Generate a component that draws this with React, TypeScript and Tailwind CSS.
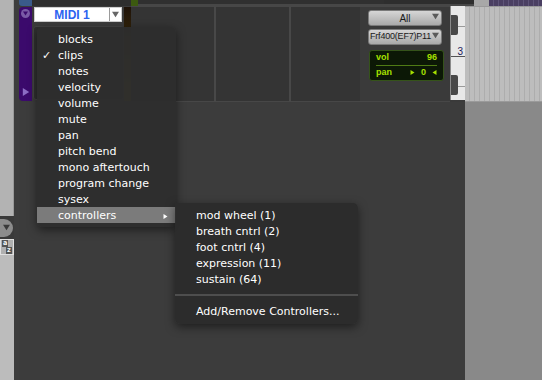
import React from "react";

const mainItems = [
  "blocks",
  "clips",
  "notes",
  "velocity",
  "volume",
  "mute",
  "pan",
  "pitch bend",
  "mono aftertouch",
  "program change",
  "sysex",
  "controllers",
];

const controllerItems = [
  "mod wheel (1)",
  "breath cntrl (2)",
  "foot cntrl (4)",
  "expression (11)",
  "sustain (64)",
];

function Tri({ dir, size, color }: { dir: "down" | "right" | "left"; size: number; color: string }) {
  const pts = dir === "down" ? "0,0 10,0 5,8" : dir === "right" ? "0,0 8,5 0,10" : "8,0 0,5 8,10";
  const vb = dir === "down" ? "0 0 10 8" : "0 0 8 10";
  return (
    <svg width={size} height={size} viewBox={vb} className="shrink-0">
      <polygon points={pts} fill={color} />
    </svg>
  );
}

function LeftColumn() {
  return (
    <div className="w-[14px] h-full flex flex-col">
      <div className="h-[216px] bg-[#b3b3b3] border-r border-[#9a9a9a]" />
      <div className="h-[23px] bg-[#3a3a3a] flex items-center">
        <div className="w-[13px] h-[18px] rounded-r-full bg-[#8c8c8c] flex items-center justify-center">
          <Tri dir="down" size={7} color="#3a3a3a" />
        </div>
      </div>
      <div className="h-[16px] bg-[#b0b0b0] border border-[#e0e0e0] flex flex-col px-[1px] font-['DejaVu_Sans_Mono',monospace] text-[7px] leading-[7px] font-bold text-white">
        <span className="bg-[#555] w-fit px-[1px]">a</span>
        <span className="bg-[#555] w-fit px-[1px] self-end">z</span>
      </div>
      <div className="flex-1 bg-[#bcbcbc]" />
    </div>
  );
}

function TrackHeader() {
  return (
    <div className="flex h-full">
      <div className="w-[13px] mt-[1px] mb-[1px] bg-[#3b0a6c] rounded-l-[4px] flex flex-col items-center justify-between py-[2px]">
        <div className="w-[9px] h-[9px] rounded-full bg-[#7a5aa6] flex items-center justify-center">
          <Tri dir="down" size={5} color="#3b0a6c" />
        </div>
        <div className="mb-[3px]">
          <Tri dir="right" size={8} color="#8c6cc4" />
        </div>
      </div>
      <div className="w-[92px] flex flex-col pt-[1px]">
        <div className="ml-[2px] w-[88px] h-[15px] bg-white flex border border-[#cfcfcf]">
          <div className="flex-1 flex items-center justify-center font-['Liberation_Sans',sans-serif] font-bold text-[12px] text-[#2d63f0]">
            MIDI 1
          </div>
          <div className="w-[12px] border-l border-[#9a9a9a] flex items-start justify-center pt-[3px]">
            <Tri dir="down" size={7} color="#666" />
          </div>
        </div>
        <div className="flex-1 ml-[1px] mt-[4px] mb-[2px] bg-[#2f2f2f] border border-[#444] rounded-[3px]" />
      </div>
      <div className="w-[7px] my-[1px] bg-[linear-gradient(180deg,#1e1208_0%,#3a2a0a_35%,#6b5c12_100%)]" />
    </div>
  );
}

function Lane({ w }: { w: string }) {
  return <div className={`${w} h-full bg-[#343434] border-y border-[#474747]`} />;
}

function Dropdown({ label, center }: { label: string; center?: boolean }) {
  return (
    <div
      className={`relative h-[16px] rounded-[3px] bg-[linear-gradient(180deg,#d6d6d6,#a9a9a9)] border border-[#7a7a7a] flex items-center ${
        center ? "justify-center text-[10px]" : "pl-[1px] text-[9px] tracking-[-0.2px]"
      } font-['Liberation_Sans',sans-serif] text-[#1a1a1a] overflow-hidden`}
    >
      {label}
      <span className="absolute right-[2px] top-[2px]">
        <Tri dir="down" size={7} color="#5a5a5a" />
      </span>
    </div>
  );
}

function RightPanel() {
  return (
    <div className="w-[90px] h-full bg-[#3a3a3a] border-y border-[#474747] pt-[3px] px-[8px] flex flex-col">
      <Dropdown label="All" center />
      <div className="h-[3px]" />
      <Dropdown label="Frf400(EF7)P11" />
      <div className="h-[5px]" />
      <div className="ml-[1px] w-[75px] h-[31px] rounded-[3px] bg-[#0c1806] border border-[#35531a] px-[6px] flex flex-col font-['Liberation_Sans',sans-serif] font-bold text-[9px] text-[#a6e000]">
        <div className="flex justify-between items-center h-[14px]">
          <span>vol</span>
          <span>96</span>
        </div>
        <div className="h-[1px] bg-[#4f7a14]" />
        <div className="flex justify-between items-center h-[13px]">
          <span>pan</span>
          <span className="flex items-center gap-[6px]">
            <Tri dir="right" size={5} color="#a6e000" />
            <span>0</span>
            <Tri dir="left" size={5} color="#a6e000" />
          </span>
        </div>
      </div>
    </div>
  );
}

function Ruler() {
  return (
    <div className="relative w-[15px] h-[94px] bg-[#e8e8e8] border-l border-[#8a8a8a]">
      <div className="absolute left-0 top-[9px] w-[7px] h-[20px] rounded-r-[2px] bg-[#484848]" />
      <div className="absolute left-0 top-[69px] w-[7px] h-[20px] rounded-r-[2px] bg-[#484848]" />
      <div className="absolute left-[7px] right-0 top-[20px] h-[1px] bg-[#9a9a9a]" />
      <div className="absolute left-0 right-0 top-[50px] h-[1px] bg-[#555]" />
      <div className="absolute left-[7px] right-0 top-[80px] h-[1px] bg-[#9a9a9a]" />
      <span className="absolute right-[2px] top-[38px] font-['Liberation_Sans',sans-serif] text-[10px] text-[#1c1c5a]">3</span>
    </div>
  );
}

function MenuRow({ label, checked, active, arrow }: { label: string; checked?: boolean; active?: boolean; arrow?: boolean }) {
  return (
    <div className={`relative h-[16px] flex items-center pl-[21px] ${active ? "bg-[#7b7b7b]" : ""}`}>
      {checked && <span className="absolute left-[5px] top-[1px] text-[11px] font-bold">✓</span>}
      <span className="pt-[2px]">{label}</span>
      {arrow && (
        <span className="absolute right-[8px] top-[7px]">
          <Tri dir="right" size={5} color="#ffffff" />
        </span>
      )}
    </div>
  );
}

export default function App() {
  return (
    <div className="relative w-[542px] h-[380px] overflow-hidden bg-[#3b3b3b] flex">
      <LeftColumn />
      <div className="w-[5px] h-full bg-[#3d3d3d]" />
      <div className="flex-1 flex flex-col">
        <div className="h-[6px] flex">
          <div className="w-[13px] bg-[#3a5a8a] rounded-bl-[3px]" />
          <div className="w-[99px] bg-[#2e2e2e]" />
          <div className="w-[7px] bg-[#3c5a10]" />
          <div className="w-[246px] bg-[#303030] border-b-2 border-[#474747]" />
          <div className="w-[90px] bg-[#2e2e2e] border-b-2 border-[#474747]" />
          <div className="w-[15px] bg-[#a8a8a8]" />
          <div className="flex-1 bg-[repeating-linear-gradient(90deg,#4a3f62_0px,#4a3f62_4px,#5e5478_4px,#5e5478_5px)]" />
        </div>
        <div className="h-[96px] flex">
          <TrackHeader />
          <Lane w="w-[83px]" />
          <div className="w-[2px] bg-[#484848]" />
          <Lane w="w-[73px]" />
          <div className="w-[2px] bg-[#484848]" />
          <Lane w="w-[69px]" />
          <RightPanel />
          <div className="flex flex-col">
            <Ruler />
            <div className="flex-1 bg-[#3a3a3a]" />
          </div>
          <div className="flex-1 bg-[repeating-linear-gradient(90deg,#bdbdbd_0px,#bdbdbd_4px,#adadad_4px,#adadad_5px)] border-y border-[#9a9a9a]" />
        </div>
        <div className="flex-1 flex">
          <div className="w-[446px] bg-[#3c3c3c]" />
          <div className="flex-1 bg-[#898989]" />
        </div>
      </div>

      <div className="absolute left-[37px] top-[27px] w-[139px] h-[200px] bg-[#2d2d2d]/95 rounded-[5px] shadow-[0_3px_10px_rgba(0,0,0,0.5)] pt-[4px] font-['DejaVu_Sans',sans-serif] text-[11px] text-white">
        {mainItems.map((item) => (
          <MenuRow
            key={item}
            label={item}
            checked={item === "clips"}
            active={item === "controllers"}
            arrow={item === "controllers"}
          />
        ))}
      </div>

      <div className="absolute left-[175px] top-[203px] w-[183px] h-[121px] bg-[#2b2b2b]/95 rounded-[5px] rounded-tl-none shadow-[0_3px_10px_rgba(0,0,0,0.5)] pt-[4px] font-['DejaVu_Sans',sans-serif] text-[11px] text-white">
        {controllerItems.map((item) => (
          <MenuRow key={item} label={item} />
        ))}
        <div className="h-[16px] flex items-center">
          <div className="w-full h-[2px] bg-[#4e4e4e]" />
        </div>
        <MenuRow label="Add/Remove Controllers..." />
      </div>
    </div>
  );
}
